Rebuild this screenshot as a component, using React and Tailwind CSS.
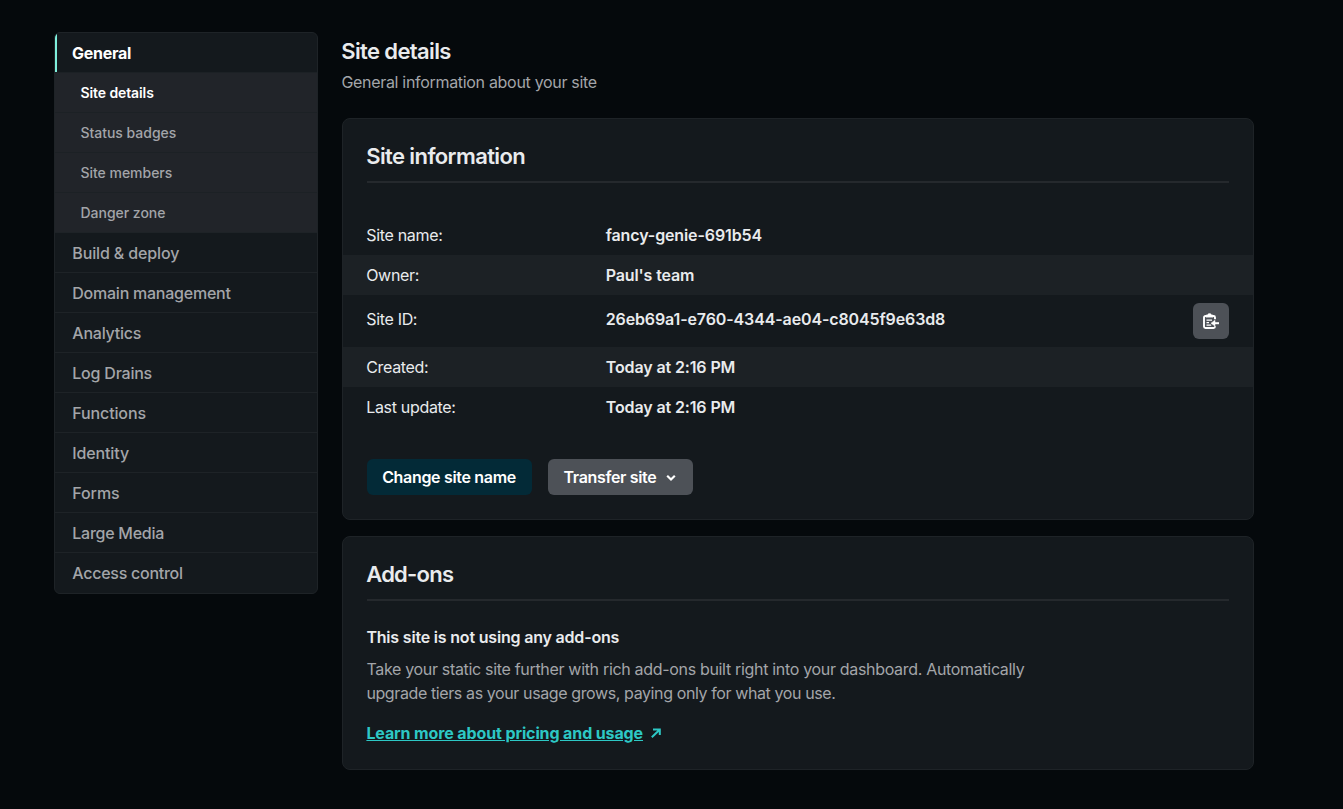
const navItems = [
  { label: "Build & deploy", tracking: "tracking-[-0.13px]" },
  { label: "Domain management", tracking: "tracking-[-0.24px]" },
  { label: "Analytics", tracking: "tracking-[-0.24px]" },
  { label: "Log Drains", tracking: "tracking-[-0.22px]" },
  { label: "Functions", tracking: "tracking-[-0.13px]" },
  { label: "Identity", tracking: "tracking-[-0.13px]" },
  { label: "Forms", tracking: "tracking-[-0.1px]" },
  { label: "Large Media", tracking: "tracking-[-0.26px]" },
  { label: "Access control", tracking: "tracking-[-0.26px]" },
];

const subItems = ["Site details", "Status badges", "Site members", "Danger zone"];

function Sidebar() {
  return (
    <nav className="w-[264px] shrink-0 overflow-hidden rounded-md border border-[#1e2327] bg-[#14191d] font-medium text-[#a3a5a9]">
      <a className="flex h-[39px] items-center border-l-2 border-[#7eefdc] pl-[15px] text-base font-bold tracking-[-0.25px] text-white">
        General
      </a>
      {subItems.map((label, i) => (
        <a
          key={label}
          className={`flex h-10 items-center border-t border-[#1c2125] bg-[#212429] pl-[25.5px] text-sm ${i === 0 ? "font-semibold tracking-[-0.1px] text-white" : "tracking-[-0.03px]"}`}
        >
          {label}
        </a>
      ))}
      {navItems.map(({ label, tracking }, i) => (
        <a
          key={label}
          className={`flex items-center border-t border-[#1e2327] pl-[17.3px] text-base ${tracking} ${i === 8 ? "h-[41px]" : "h-10"}`}
        >
          {label}
        </a>
      ))}
    </nav>
  );
}

function Card({ title, tracking, className, children }) {
  return (
    <section className={`rounded-lg border border-[#1e2327] bg-[#14191d] ${className}`}>
      <h2 className={`mx-6 mt-[21px] h-[43px] border-b-2 border-[#25292d] -indent-[0.8px] text-[22px] leading-8 font-semibold text-[#e9ebed] ${tracking}`}>
        {title}
      </h2>
      {children}
    </section>
  );
}

function Row({ label, value, striped, children }) {
  return (
    <div className={`flex items-start px-6 py-2 ${striped ? "bg-[#1c2125]" : ""}`}>
      <dt className={`w-[239px] -indent-[0.8px] leading-6 tracking-[-0.32px] ${children ? "pt-1" : ""}`}>{label}</dt>
      <dd className={`grow -indent-[0.3px] leading-6 font-semibold tracking-[-0.12px] ${children ? "pt-1" : ""}`}>{value}</dd>
      {children}
    </div>
  );
}

function CopyIcon() {
  return (
    <svg width="16" height="16" viewBox="0 0 16 16" fill="none" stroke="white" strokeLinejoin="round">
      <path d="M12 6.2V4.5a1.5 1.5 0 0 0-1.5-1.5h-8A1.5 1.5 0 0 0 1 4.500v9A1.500 1.500 0 0 0 2.500 15h8a1.500 1.500 0 0 0 1.500-1.500v-.2" strokeWidth="1.900" />
      <path d="M3 4.200V2.600c0-.6.4-.9 1-.9h.7C5 .8 5.600.4 6.500.4S8 .8 8.300 1.700H9c.6 0 1 .3 1 .9v1.600z" fill="white" strokeWidth=".4" />
      <path d="M3.500 7.200H9M3.500 9.700H6M3.500 12.200h4.700" strokeWidth="1.300" />
      <path d="M16 10.200h-5" strokeWidth="2" />
      <path d="m12 7.300-4 2.900 4 2.900z" fill="white" strokeWidth=".5" />
    </svg>
  );
}

export default function App() {
  return (
    <div className="flex min-h-[809px] items-start gap-6 bg-[#05090c] pt-8 pl-[54px] font-['Inter',sans-serif] text-base text-[#e9ebed]">
      <Sidebar />
      <main className="w-[912px]">
        <h1 className="mt-[3px] -indent-[0.8px] text-[22px] leading-8 font-semibold tracking-[-0.62px]">Site details</h1>
        <p className="mt-[3px] mb-6 -indent-[0.6px] leading-6 tracking-[-0.31px] text-[#a3a5a9]">General information about your site</p>

        <Card title="Site information" tracking="tracking-[-0.6px]" className="h-[402px]">
          <dl className="mt-8">
            <Row label="Site name:" value="fancy-genie-691b54" />
            <Row label="Owner:" value="Paul's team" striped />
            <Row label="Site ID:" value="26eb69a1-e760-4344-ae04-c8045f9e63d8">
              <button aria-label="Copy site ID" className="flex size-9 items-center justify-center rounded-md bg-[#4d5157]">
                <CopyIcon />
              </button>
            </Row>
            <Row label="Created:" value="Today at 2:16 PM" striped />
            <Row label="Last update:" value="Today at 2:16 PM" />
          </dl>
          <div className="mt-8 ml-6 flex gap-4 font-semibold text-white">
            <button className="h-9 w-[165px] rounded-md bg-[#032a37] pr-px tracking-[-0.32px]">Change site name</button>
            <button className="flex h-9 w-[145px] items-center rounded-md bg-[#4d5157] pl-[15.5px] tracking-[-0.34px]">
              Transfer site
              <svg className="mt-0.5 ml-2.5" width="10" height="8" viewBox="0 0 10 8" fill="none" stroke="white" strokeWidth="2.2">
                <path d="m1.200 1.800 3.800 3.700 3.800-3.700" />
              </svg>
            </button>
          </div>
        </Card>

        <Card title="Add-ons" tracking="tracking-[-0.75px]" className="mt-4 h-[234px]">
          <div className="mt-6 ml-[23.4px]">
            <h3 className="leading-6 font-semibold tracking-[-0.19px]">This site is not using any add-ons</h3>
            <p className="mt-2 leading-6 tracking-[-0.32px] text-[#a3a5a9]">
              Take your static site further with rich add-ons built right into your dashboard. Automatically
              <br />
              <span className="tracking-[-0.39px]">upgrade tiers as your usage grows, paying only for what you use.</span>
            </p>
            <a className="mt-4 flex items-center gap-2 leading-6 font-bold tracking-[-0.12px] text-[#2dc8c5]">
              <span className="underline">Learn more about pricing and usage</span>
              <svg width="10" height="10" viewBox="0 0 10 10" fill="none" stroke="currentColor" strokeWidth="2">
                <path d="M2 1.500h6.800V7M8.600 1.700.8 9.200" />
              </svg>
            </a>
          </div>
        </Card>
      </main>
    </div>
  );
}
